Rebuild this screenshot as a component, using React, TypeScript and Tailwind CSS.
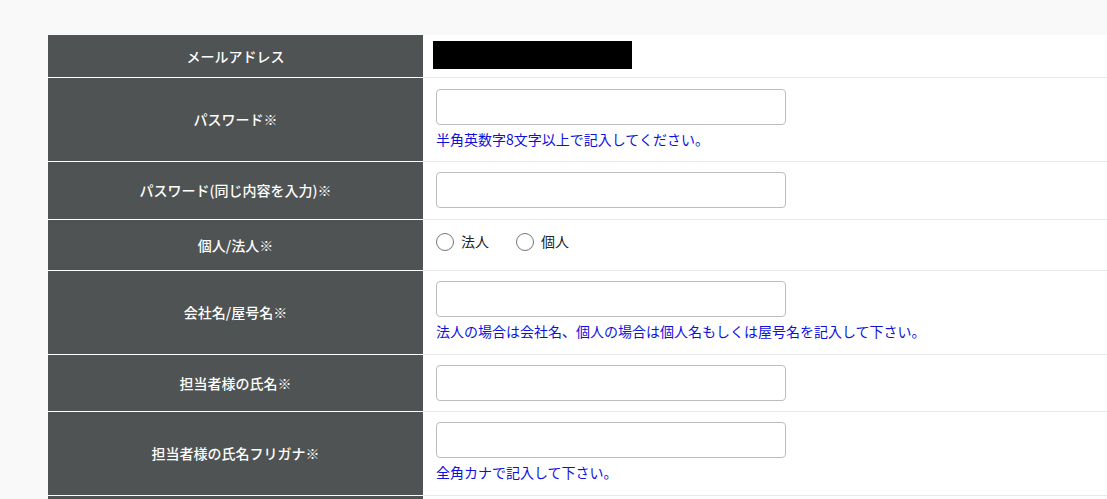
import React from "react";

const font = { fontFamily: '"Noto Sans CJK JP", "Noto Sans", sans-serif' };

function Header({ children }: { children?: React.ReactNode }) {
  return (
    <div className="w-[375px] shrink-0 bg-[#4f5353] text-[#fdfdfd] text-[14px] font-medium flex items-center justify-center border-b border-white">
      {children}
    </div>
  );
}

function Cell({ children, className = "pl-[13px]" }: { children?: React.ReactNode; className?: string }) {
  return (
    <div className={"flex-1 bg-white border-b border-[#e8e8e8] " + className}>
      {children}
    </div>
  );
}

function Input() {
  return <div className="w-[350px] h-[36px] rounded-[4px] border border-[#bdbdbd] bg-white" />;
}

function Help({ children }: { children: React.ReactNode }) {
  return <div className="mt-[4px] mb-[3px] text-[14px] leading-[20px] text-[#1010dd]">{children}</div>;
}

function Radio({ label }: { label: string }) {
  return (
    <div className="flex items-center gap-[7px]">
      <span className="w-[18px] h-[18px] rounded-full border border-[#767676] bg-white" />
      <span className="text-[14px] text-[#222]">{label}</span>
    </div>
  );
}

export default function App() {
  return (
    <div className="w-[1107px] h-[499px] overflow-hidden bg-[#f9f9f9] pt-[35px] pl-[48px]" style={font}>
      <div className="w-[1100px] flex flex-col">
        <div className="flex h-[43px]">
          <Header>メールアドレス</Header>
          <Cell className="pl-[10px] pt-[6px]">
            <div className="w-[199px] h-[28px] bg-black" />
          </Cell>
        </div>
        <div className="flex">
          <Header>パスワード※</Header>
          <Cell className="pl-[13px] pt-[11px] pb-[9px]">
            <Input />
            <Help>半角英数字8文字以上で記入してください。</Help>
          </Cell>
        </div>
        <div className="flex">
          <Header>パスワード(同じ内容を入力)※</Header>
          <Cell className="pl-[13px] pt-[10px] pb-[11px]">
            <Input />
          </Cell>
        </div>
        <div className="flex h-[51px]">
          <Header>個人/法人※</Header>
          <Cell className="pl-[13px] pt-[11px]">
            <div className="flex items-center gap-[27px]">
              <Radio label="法人" />
              <Radio label="個人" />
            </div>
          </Cell>
        </div>
        <div className="flex">
          <Header>会社名/屋号名※</Header>
          <Cell className="pl-[13px] py-[10px]">
            <Input />
            <Help>法人の場合は会社名、個人の場合は個人名もしくは屋号名を記入して下さい。</Help>
          </Cell>
        </div>
        <div className="flex">
          <Header>担当者様の氏名※</Header>
          <Cell className="pl-[13px] py-[10px]">
            <Input />
          </Cell>
        </div>
        <div className="flex">
          <Header>担当者様の氏名フリガナ※</Header>
          <Cell className="pl-[13px] py-[10px]">
            <Input />
            <Help>全角カナで記入して下さい。</Help>
          </Cell>
        </div>
        <div className="flex h-[60px]">
          <Header />
          <Cell />
        </div>
      </div>
    </div>
  );
}
